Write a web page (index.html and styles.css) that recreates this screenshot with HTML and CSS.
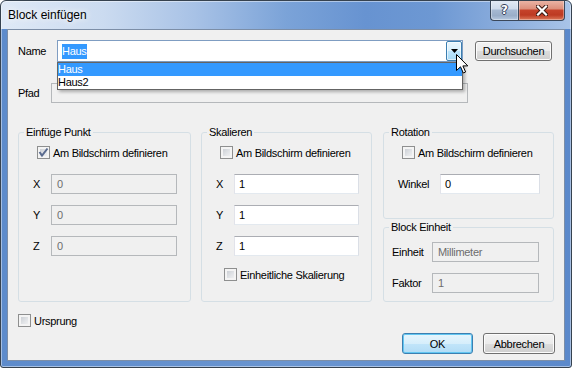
FILE: index.html
```html
<!DOCTYPE html>
<html lang="de">
<head>
<meta charset="utf-8">
<title>Block einfügen</title>
<link rel="stylesheet" href="styles.css">
</head>
<body>
<div class="window">
  <div class="titlebar">
    <span class="title">Block einfügen</span>
    <div class="caption-buttons">
      <div class="cbtn help"><span class="qm">?</span></div>
      <div class="cbtn close">
        <svg width="12" height="11" viewBox="0 0 12 11"><path d="M2 1.5 L10 9.5 M10 1.5 L2 9.5" stroke="#3d1a12" stroke-width="4.2" stroke-linecap="square" fill="none"/><path d="M2 1.5 L10 9.5 M10 1.5 L2 9.5" stroke="#ffffff" stroke-width="2.2" stroke-linecap="square" fill="none"/></svg>
      </div>
    </div>
  </div>
  <div class="client">
    <div class="row name-row">
      <span class="lbl name-lbl">Name</span>
      <div class="combo">
        <span class="combo-text"><span class="sel">Haus</span></span>
        <span class="combo-btn"><svg width="7" height="4" viewBox="0 0 7 4"><path d="M0 0 H7 L3.5 4 Z" fill="#000"/></svg></span>
        <ul class="dropdown">
          <li class="hl">Haus</li>
          <li>Haus2</li>
        </ul>
      </div>
      <button class="btn browse">Durchsuchen</button>
    </div>
    <div class="row pfad-row">
      <span class="lbl pfad-lbl">Pfad</span>
      <div class="tb dis pfad"></div>
    </div>
    <div class="groups">
      <fieldset class="group g-insert">
        <legend>Einfüge Punkt</legend>
        <div class="gbody">
          <div class="chk-row"><span class="cb checked"><svg width="13" height="13" viewBox="0 0 13 13"><path d="M2.5 6 L5 9.5 L10.5 2.5" stroke="#5a6b8f" stroke-width="2" fill="none"/></svg></span><span>Am Bildschirm definieren</span></div>
          <div class="frow first"><span class="flbl">X</span><div class="tb dis w126">0</div></div>
          <div class="frow"><span class="flbl">Y</span><div class="tb dis w126">0</div></div>
          <div class="frow"><span class="flbl">Z</span><div class="tb dis w126">0</div></div>
        </div>
      </fieldset>
      <fieldset class="group g-scale">
        <legend>Skalieren</legend>
        <div class="gbody">
          <div class="chk-row"><span class="cb"></span><span>Am Bildschirm definieren</span></div>
          <div class="frow first"><span class="flbl s">X</span><div class="tb w125">1</div></div>
          <div class="frow"><span class="flbl s">Y</span><div class="tb w125">1</div></div>
          <div class="frow"><span class="flbl s">Z</span><div class="tb w125">1</div></div>
          <div class="chk-row uni"><span class="cb"></span><span>Einheitliche Skalierung</span></div>
        </div>
      </fieldset>
      <div class="col-right">
        <fieldset class="group g-rot">
          <legend>Rotation</legend>
          <div class="gbody">
            <div class="chk-row"><span class="cb"></span><span>Am Bildschirm definieren</span></div>
            <div class="frow first"><span class="flbl rot">Winkel</span><div class="tb w100">0</div></div>
          </div>
        </fieldset>
        <fieldset class="group g-unit">
          <legend>Block Einheit</legend>
          <div class="gbody unit">
            <div class="frow u"><span class="flbl un">Einheit</span><div class="tb dis w107">Millimeter</div></div>
            <div class="frow u"><span class="flbl un">Faktor</span><div class="tb dis w107">1</div></div>
          </div>
        </fieldset>
      </div>
    </div>
    <div class="row origin-row"><div class="chk-row plain"><span class="cb"></span><span>Ursprung</span></div></div>
    <div class="row buttons">
      <button class="btn default ok">OK</button>
      <button class="btn cancel">Abbrechen</button>
    </div>
  </div>
  <svg class="cursor" width="14" height="21" viewBox="0 0 14 21"><path d="M0.5 0.5 L0.5 16.5 L4.5 12.8 L7.3 19 L9.6 18 L6.9 11.9 L11.8 11.9 Z" fill="#fff" stroke="#000" stroke-width="1" stroke-linejoin="miter"/></svg>
</div>
</body>
</html>
```
FILE: styles.css
```css
* { box-sizing: border-box; }
html, body { margin: 0; padding: 0; background: #ffffff; }
body {
  font-family: "Liberation Sans", Arial, sans-serif;
  font-size: 11px;
  letter-spacing: -0.3px;
  color: #000;
}

.window {
  position: relative;
  width: 572px;
  height: 368px;
  border: 1px solid #36424f;
  border-radius: 6px 6px 3px 3px;
  padding: 0 6px 6px 6px;
  display: flex;
  flex-direction: column;
  overflow: hidden;
  background:
    linear-gradient(to right, #dfe9f6 0%, #cbdbf0 18%, #a8c2e6 34%, #7ba3d8 50%, #6793d1 64%, #6d98d3 76%, #8fb0de 90%, #a9c4e8 100%) top left / 100% 28px no-repeat,
    linear-gradient(to right, #5d8bcb, #6a95d0 50%, #5b89cb) ;
  box-shadow: inset 0 0 0 1px rgba(255,255,255,0.45);
}

.titlebar {
  height: 28px;
  margin: 0 -6px;
  padding-left: 7px;
  display: flex;
  align-items: flex-start;
}
.title {
  font-size: 12px;
  letter-spacing: 0;
  line-height: 16px;
  padding-top: 6px;
  color: #000;
  text-shadow: 0 0 6px rgba(255,255,255,0.95), 0 0 10px rgba(255,255,255,0.8);
}
.caption-buttons {
  margin-left: auto;
  margin-right: 6px;
  margin-top: -1px;
  display: flex;
}
.cbtn {
  height: 21px;
  border: 1px solid #3a475a;
  border-top: none;
  display: flex;
  align-items: center;
  justify-content: center;
  box-shadow: inset 0 0 0 1px rgba(255,255,255,0.35);
}
.help {
  width: 28px;
  border-right: none;
  border-radius: 0 0 0 4px;
  background: linear-gradient(#e4ebf5 0%, #cfdbeb 45%, #a6b9d3 50%, #9aaec9 78%, #b7c9e0 100%);
}
.qm {
  color: #fff;
  font-family: "DejaVu Sans", sans-serif;
  font-weight: bold;
  font-size: 12px;
  letter-spacing: 0;
  line-height: 12px;
  margin-top: -1px;
  text-shadow: 1px 0 0 #34405a, -1px 0 0 #34405a, 0 1px 0 #34405a, 0 -1px 0 #34405a;
}
.close {
  width: 47px;
  border-radius: 0 0 4px 0;
  background: linear-gradient(#ecb8aa 0%, #dc8e7a 45%, #c6432b 50%, #bd3a22 75%, #dc7859 100%);
}

.client {
  flex: 1;
  border: 1px solid #7c8ea7;
  background: #f0f0f0;
  display: flex;
  flex-direction: column;
  padding: 10px 0 0 10px;
  position: relative;
}

.row { display: flex; align-items: center; }

.name-row { height: 22px; }
.name-lbl { width: 39px; }
.combo {
  position: relative;
  width: 406px;
  height: 22px;
  border: 1px solid #7f9dc2;
  background: #fff;
  display: flex;
  align-items: center;
}
.combo-text { flex: 1; padding-left: 4px; display: flex; align-items: center; }
.sel {
  background: #3399ff;
  color: #fff;
  line-height: 15px;
  padding: 0 1px 0 0;
}
.combo-btn {
  width: 16px;
  height: 20px;
  border: 1px solid #3c7fb1;
  border-radius: 2px;
  background: linear-gradient(#eaf6fd 0%, #d9f0fc 50%, #bee6fd 50%, #a7d9f5 100%);
  box-shadow: inset 0 0 0 1px rgba(255,255,255,0.6);
  display: flex;
  align-items: center;
  justify-content: center;
}
.dropdown {
  position: absolute;
  left: -1px;
  top: 21px;
  width: 406px;
  margin: 0;
  padding: 0;
  list-style: none;
  border: 1px solid #646464;
  background: #fff;
  box-shadow: 2px 2px 3px rgba(0,0,0,0.28);
  z-index: 5;
}
.dropdown li { height: 13px; line-height: 13px; padding-left: 0; }
.dropdown li.hl { background: #3399ff; color: #fff; }

.btn {
  font: inherit;
  letter-spacing: inherit;
  color: #000;
  padding: 0;
  height: 21px;
  border: 1px solid #707070;
  border-radius: 3px;
  background: linear-gradient(#f2f2f2 0%, #ebebeb 50%, #dddddd 50%, #cfcfcf 100%);
  box-shadow: inset 0 0 0 1px #fcfcfc;
}
.browse { margin-left: 12px; width: 77px; height: 20px; }

.pfad-row { margin-top: 20px; height: 21px; }
.pfad-lbl { width: 33px; }
.pfad { width: 417px; height: 21px; }

.tb {
  height: 20px;
  border: 1px solid;
  border-color: #abadb3 #dbdfe6 #e3e9ef #e2e3ea;
  background: #fff;
  padding-left: 4px;
  display: flex;
  align-items: center;
}
.tb.dis {
  background: #f0f0f0;
  border-color: #b5b8bb;
  color: #6d6d6d;
  padding-left: 5px;
}
.w126 { width: 126px; }
.w125 { width: 125px; }
.w100 { width: 100px; }
.w107 { width: 107px; }

.groups {
  display: flex;
  height: 176px;
  margin-top: 23px;
}
.group {
  margin: 0;
  padding: 0;
  min-width: 0;
  border: 1px solid #d5dfe5;
  border-radius: 3px;
}
.group legend {
  margin-left: 5px;
  padding: 0 2px;
  line-height: 13px;
}
.g-insert { width: 173px; }
.g-scale { width: 171px; margin-left: 10px; }
.col-right {
  width: 171px;
  margin-left: 11px;
  display: flex;
  flex-direction: column;
  gap: 2px;
}
.g-rot { height: 93px; }
.g-unit { flex: 1; }

.gbody { padding-top: 7px; }
.gbody.unit { padding-top: 0; }

.chk-row {
  display: flex;
  align-items: center;
  height: 13px;
  padding-left: 18px;
  gap: 3px;
}
.chk-row.uni { margin-top: 12px; padding-left: 22px; }
.chk-row.plain { padding-left: 0; }

.cb {
  width: 13px;
  height: 13px;
  flex: none;
  border: 1px solid #8e8f8f;
  background: linear-gradient(135deg, #c3c7cd 0%, #e4e6e9 60%, #f6f6f6 100%);
  box-shadow: inset 0 0 0 2px #f4f4f4;
  display: flex;
  align-items: center;
  justify-content: center;
  overflow: visible;
}
.cb svg { flex: none; margin: -1px; }

.frow {
  display: flex;
  align-items: center;
  height: 20px;
  padding-left: 14px;
  margin-top: 11px;
}
.frow.first { margin-top: 15px; }
.frow.u { padding-left: 8px; }
.frow.u:first-child { margin-top: 8px; }
.flbl { width: 18px; flex: none; }
.flbl.rot { width: 42px; }
.flbl.un { width: 40px; }

.origin-row { margin-top: 12px; height: 13px; }

.buttons {
  margin-top: 6px;
  justify-content: flex-end;
  gap: 10px;
  padding-right: 9px;
}
.ok {
  width: 71px;
  border-color: #3c7fb1;
  background: linear-gradient(#e6f5fd 0%, #d6eefb 50%, #c1e5fa 50%, #b2dcf5 100%);
  box-shadow: inset 0 0 0 1px #62c6f1;
}
.cancel { width: 72px; }

.cursor {
  position: absolute;
  left: 455px;
  top: 53px;
  z-index: 10;
}
```
